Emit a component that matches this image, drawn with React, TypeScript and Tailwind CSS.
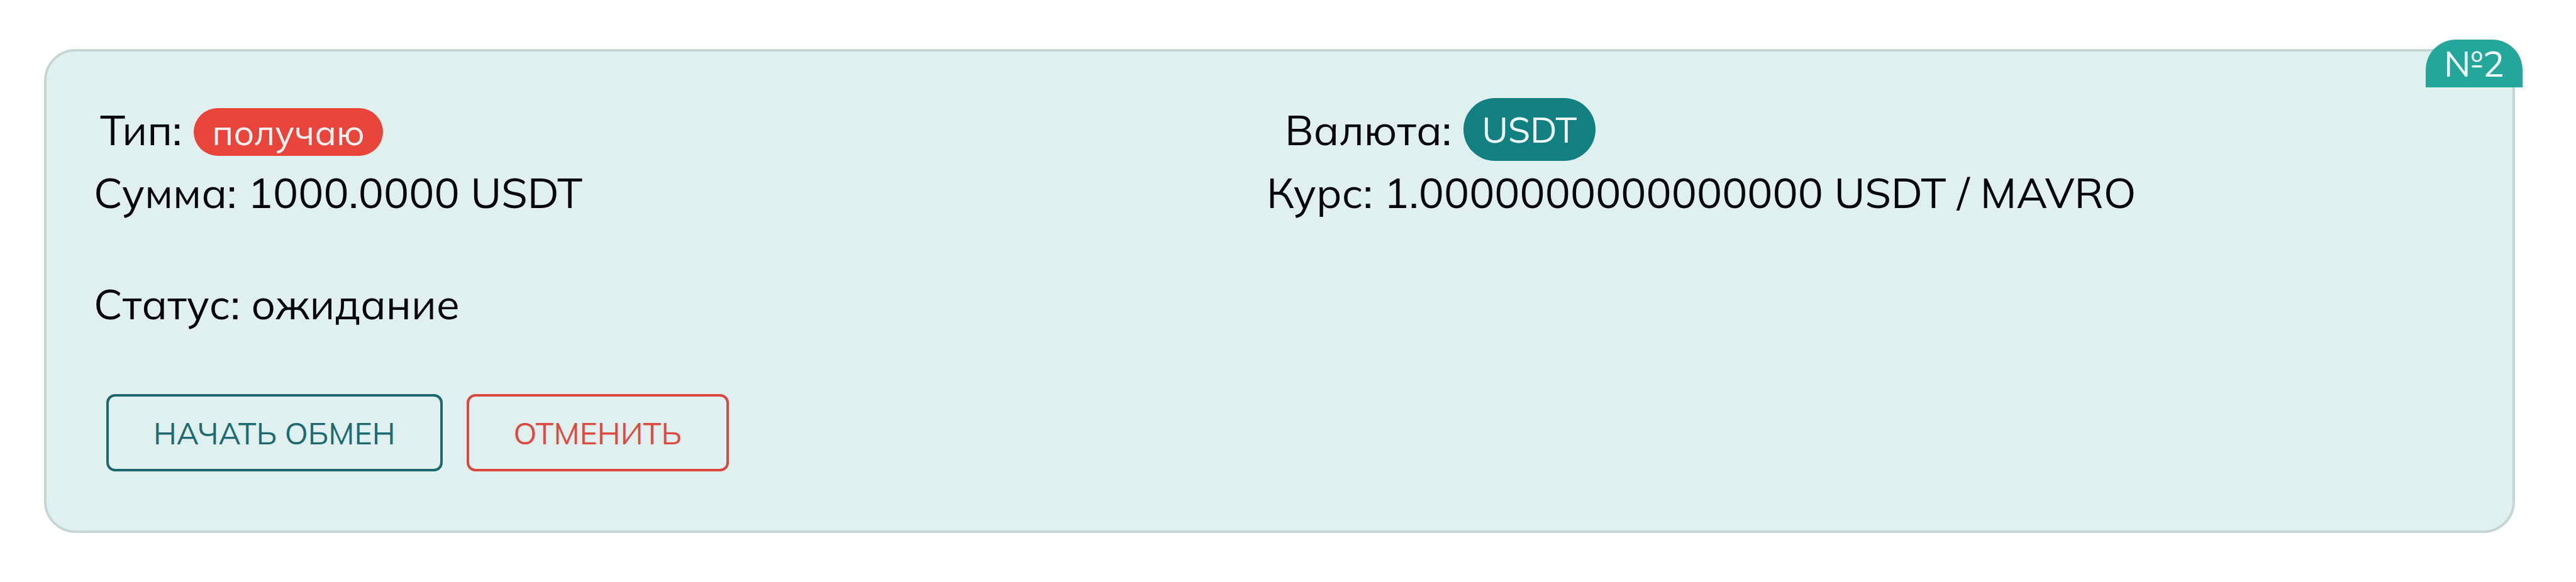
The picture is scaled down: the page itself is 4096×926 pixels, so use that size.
export default function App() {
  return (
    <main className="bg-white pt-[78px] pr-[97px] pb-[76px] pl-[70px] font-['Mulish','Nunito_Sans','Open_Sans',sans-serif] text-[67px] leading-[100px] text-[#050607]">
      <article className="relative rounded-[50px] border-4 border-[#c5d5d4] bg-[#dff0ef] pt-[74px] pr-[116px] pb-[94px] pl-[75px]">
        <span className="absolute -top-[19px] -right-[16px] rounded-t-[48px] bg-[#24a69a] px-[29px] text-[57px] leading-[76px] text-[#f1fbfb]">
          №2
        </span>

        <div className="grid grid-cols-2">
          <div>
            <div className="flex h-[100px] items-baseline gap-[19px] pl-[10px]">
              <span>Тип:</span>
              <span className="rounded-full bg-[#e94439] px-[29px] text-[57px] leading-[76px] text-[#fdf1f1]">
                получаю
              </span>
            </div>
            <p>Сумма: 1000.0000 USDT</p>
          </div>
          <div>
            <div className="flex h-[100px] items-center gap-[19px] pl-[29px]">
              <span>Валюта:</span>
              <span className="rounded-full bg-[#127f80] px-[29px] text-[57px] leading-[100px] text-[#eefafa]">
                USDT
              </span>
            </div>
            <p>Курс: 1.0000000000000000 USDT / MAVRO</p>
          </div>
        </div>

        <p className="mt-[77px]">Статус: ожидание</p>

        <div className="mt-[94px] flex gap-[38px] pl-[20px]">
          <button
            type="button"
            className="h-[123px] rounded-[14px] border-4 border-[#1d686e] px-[71px] text-[48px] leading-[60px] text-[#1d6a71]"
          >
            НАЧАТЬ ОБМЕН
          </button>
          <button
            type="button"
            className="h-[123px] rounded-[14px] border-4 border-[#d9483f] px-[71px] text-[48px] leading-[60px] text-[#dc4a42]"
          >
            ОТМЕНИТЬ
          </button>
        </div>
      </article>
    </main>
  );
}
